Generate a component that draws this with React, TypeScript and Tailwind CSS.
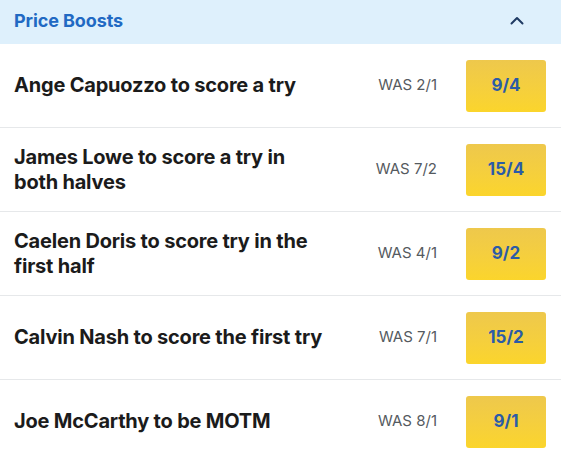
const boosts = [
  { name: 'Ange Capuozzo to score a try', was: '2/1', odds: '9/4' },
  { name: 'James Lowe to score a try in both halves', was: '7/2', odds: '15/4' },
  { name: 'Caelen Doris to score try in the first half', was: '4/1', odds: '9/2' },
  { name: 'Calvin Nash to score the first try', was: '7/1', odds: '15/2' },
  { name: 'Joe McCarthy to be MOTM', was: '8/1', odds: '9/1' },
];

const App = () => {
  return (
    <div className="w-[561px] h-[453px] overflow-hidden bg-white font-['Inter',sans-serif]">
      {/* Header */}
      <div className="h-[44px] bg-[#def0fc] flex items-center justify-between pl-[14px] pr-[37px] pb-[4px]">
        <span className="text-[18px] font-bold text-[#2169c3] tracking-[-0.1px]">Price Boosts</span>
        <svg width="14" height="9" viewBox="0 0 14 9" fill="none">
          <path d="M1.5 7.5L7 2L12.5 7.5" stroke="#1f3b63" strokeWidth="2" strokeLinecap="round" strokeLinejoin="round" />
        </svg>
      </div>

      {boosts.map((b) => (
        <div key={b.name} className="flex items-center h-[84px] pl-[14px] pr-[15px] border-b border-[#e6e8ea]">
          <div className="w-[312px] text-[20px] leading-[25px] font-bold text-[#1b1b1b] tracking-[-0.2px]">{b.name}</div>
          <div className="flex-1 text-right pr-[29px] text-[15px] text-[#555a60]">WAS {b.was}</div>
          <div className="w-[80px] h-[52px] rounded-[3px] bg-gradient-to-b from-[#eec84c] to-[#fbd52b] flex items-center justify-center text-[17px] font-bold text-[#2b5ba7]">
            {b.odds}
          </div>
        </div>
      ))}
    </div>
  );
};

export default App;
